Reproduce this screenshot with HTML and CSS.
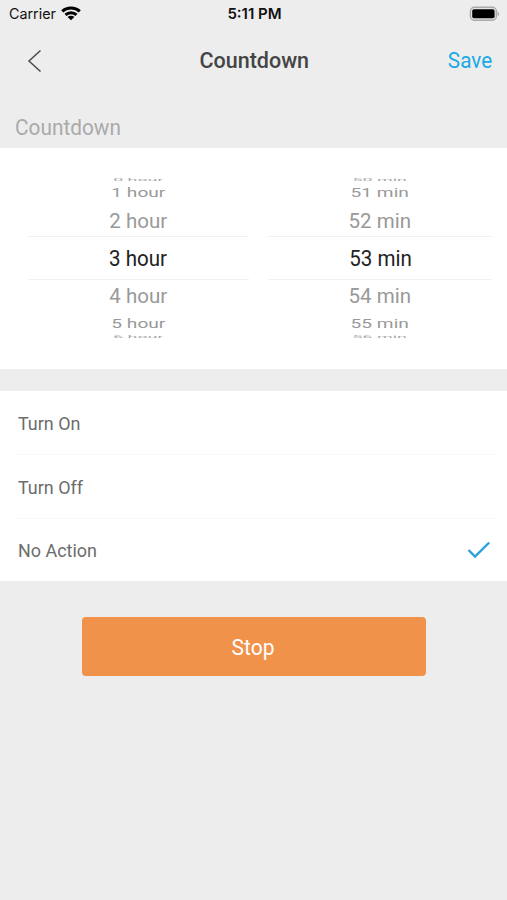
FILE: index.html
```html
<!DOCTYPE html>
<html lang="en">
<head>
<meta charset="utf-8">
<title>Countdown</title>
<link rel="stylesheet" href="styles.css">
</head>
<body>
<div class="status">
  <div class="status-left"><span class="carrier">Carrier</span>
    <svg class="wifi" width="20" height="15" viewBox="0 0 20 15" fill="none" stroke="#000" stroke-width="2.9"><path d="M1.2 5.4C6 .9 14 .9 18.8 5.4M4.5 8.9c3-2.9 8-2.9 11 0"/><path d="M10 14.2 6.6 10.9c1.9-1.7 4.9-1.7 6.8 0z" fill="#000" stroke="none"/></svg>
  </div>
  <span class="time">5:11 PM</span>
  <svg class="battery" width="32" height="16" viewBox="0 0 32 16"><rect x="2.4" y="1.2" width="26" height="13" rx="4" fill="#e4e4e4" stroke="#aaa" stroke-width="1.4"/><rect x="4.2" y="3.2" width="22.4" height="9" rx="1.8" fill="#000"/><path d="M29.6 5.4c2.1.8 2.1 3.8 0 4.6z" fill="#aaa"/></svg>
</div>
<header class="nav">
  <svg class="back" width="16" height="24" viewBox="0 0 16 24" fill="none" stroke="#4a4a4a" stroke-width="1.5"><path d="M13.5 1.5 2 12l11.5 10.5"/></svg>
  <h1 class="title">Countdown</h1>
  <span class="save">Save</span>
</header>
<h2 class="section">Countdown</h2>
<main>
  <section class="picker">
    <div class="wheel">
      <div class="item edge"><span>0 hour</span></div>
      <div class="item far"><span>1 hour</span></div>
      <div class="item near above"><span>2 hour</span></div>
      <div class="item current"><span>3 hour</span></div>
      <div class="item near"><span>4 hour</span></div>
      <div class="item far"><span>5 hour</span></div>
      <div class="item edge"><span>6 hour</span></div>
    </div>
    <div class="wheel">
      <div class="item edge"><span>50 min</span></div>
      <div class="item far"><span>51 min</span></div>
      <div class="item near above"><span>52 min</span></div>
      <div class="item current"><span>53 min</span></div>
      <div class="item near"><span>54 min</span></div>
      <div class="item far"><span>55 min</span></div>
      <div class="item edge"><span>56 min</span></div>
    </div>
  </section>
  <section class="options">
    <div class="option"><span>Turn On</span></div>
    <div class="option"><span>Turn Off</span></div>
    <div class="option"><span>No Action</span>
      <svg class="check" width="24" height="18" viewBox="0 0 24 18" fill="none" stroke="#2b9fdb" stroke-width="2.4"><path d="M1.5 9 8 15.5 22.2 1.5"/></svg>
    </div>
  </section>
  <button class="stop"><span>Stop</span></button>
</main>
</body>
</html>
```

FILE: styles.css
```css
* { box-sizing: border-box; }
body { margin: 0; width: 507px; height: 900px; overflow: hidden; background: #ededed; font-family: Roboto, "Liberation Sans", sans-serif; color: #444; }
.status { display: grid; grid-template-columns: 1fr auto 1fr; align-items: center; height: 27px; padding: 0 7px 0 9px; font: 15px/28px Inter, sans-serif; color: #111; }
.status-left { display: flex; align-items: center; gap: 5.5px; }
.carrier { font-size: 14.3px; }
.wifi { margin-top: -1px; }
.time { font-size: 15px; font-weight: 600; }
.battery { justify-self: end; }
.nav { display: grid; grid-template-columns: 1fr auto 1fr; align-items: center; height: 66px; padding: 0 15px 0 27px; }
.back { margin-top: 1px; }
.title { margin: 0 11px 0 0; font-size: 22.5px; line-height: 28px; font-weight: 500; transform: scaleX(.955); transform-origin: center; }
.save { justify-self: end; font-size: 22.5px; line-height: 28px; color: #18a9e6; transform: scaleX(.92); transform-origin: right; }
.section { margin: 0 0 0 15px; height: 55px; padding: 20px 0 0; font-size: 22.5px; line-height: 28px; font-weight: 400; color: #aaa; transform: scaleX(.925); transform-origin: left; }
.picker { height: 221px; padding: 30px 16px 0 28px; display: grid; grid-template-columns: 221px 222px; column-gap: 20px; background: #fff; align-items: start; }
.wheel { display: grid; grid-template-rows: 3px 23px 32px 44px 33px 22px 4px; }
.item { display: flex; align-items: center; justify-content: center; color: #999; font-size: 21.5px; line-height: 26px; white-space: nowrap; }
.item span { display: block; }
.current { color: #222; font-size: 22px; padding-top: 2px; box-shadow: inset 0 1px #f0f0f0, inset 0 -1px #f0f0f0; }
.current span { transform: scaleX(.935); }
.near span { transform: scale(.955, .9); }
.above { padding-top: 3px; }
.far span { transform: scale(.89, .58); }
.edge { color: #a6a6a6; }
.edge span { transform: scale(.83, .19); }
.options { margin-top: 22px; height: 190px; display: grid; grid-template-rows: 64px 64px 62px; padding-left: 15px; background: #fff; }
.option { display: flex; align-items: center; justify-content: space-between; margin-right: 10px; padding: 1px 6px 0 3px; font-size: 19.2px; color: #6c6c6c; border-bottom: 1px solid #fafafa; }
.option:last-child { padding-top: 0; border-bottom: 0; }
.option span { transform: scaleX(.935); transform-origin: left; }
.stop { display: block; width: 344px; height: 59px; margin: 36px auto 0 82px; padding: 0 2px 0 0; border: 0; border-radius: 4px; background: #f0924a; color: #fff; font: 22.5px Roboto, sans-serif; }
.stop span { display: inline-block; transform: scaleX(.935); }
```
